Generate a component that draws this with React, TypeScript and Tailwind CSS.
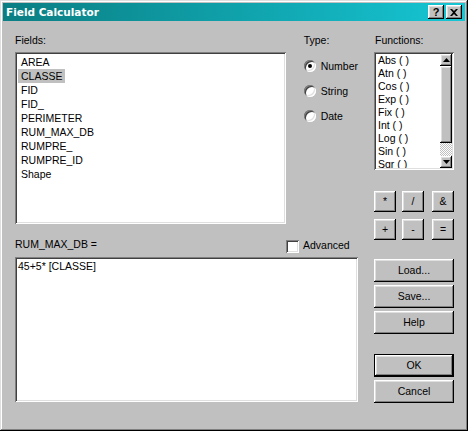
import React from "react";

const raised =
  "shadow-[inset_-1px_-1px_#000,inset_1px_1px_#fff,inset_-2px_-2px_#808080,inset_2px_2px_#dfdfdf]";
const sunken =
  "shadow-[inset_1px_1px_#808080,inset_-1px_-1px_#fff,inset_2px_2px_#404040,inset_-2px_-2px_#dfdfdf]";

function Btn({ children, className = "" }: { children: React.ReactNode; className?: string }) {
  return (
    <div className={`bg-[#c0c0c0] ${raised} flex items-center justify-center ${className}`}>
      {children}
    </div>
  );
}

function Radio({ label, checked }: { label: string; checked?: boolean }) {
  return (
    <div className="flex items-start h-[13px]">
      <div className={`w-[12px] h-[12px] rounded-full bg-white ${sunken} flex items-center justify-center`}>
        {checked && <div className="w-[4px] h-[4px] rounded-full bg-black" />}
      </div>
      <span className="ml-[5px]">{label}</span>
    </div>
  );
}

const fields = ["AREA", "CLASSE", "FID", "FID_", "PERIMETER", "RUM_MAX_DB", "RUMPRE_", "RUMPRE_ID", "Shape"];
const funcs = ["Abs ( )", "Atn ( )", "Cos ( )", "Exp ( )", "Fix ( )", "Int ( )", "Log ( )", "Sin ( )", "Sqr ( )"];

function Arrow({ up }: { up?: boolean }) {
  return (
    <svg width="7" height="4" viewBox="0 0 7 4">
      {up ? <polygon points="0,4 7,4 3.5,0" fill="#000" /> : <polygon points="0,0 7,0 3.5,4" fill="#000" />}
    </svg>
  );
}

export default function App() {
  return (
    <div className="w-[468px] h-[431px] bg-[#c0c0c0] p-[3px] flex flex-col shadow-[inset_-1px_-1px_#000,inset_1px_1px_#dfdfdf,inset_-2px_-2px_#808080,inset_2px_2px_#fff] text-black text-[10.5px] leading-[13px] font-['Liberation_Sans',Arial,sans-serif]">
      {/* Title bar */}
      <div className="h-[18px] shrink-0 flex items-center pl-[3px] pr-[3px] bg-linear-to-r from-[#0a7e83] to-[#16c6d4]">
        <span className="text-white font-bold text-[10.5px] leading-[12px] font-['DejaVu_Sans',sans-serif]">
          Field Calculator
        </span>
        <div className="ml-auto flex gap-[2px]">
          <Btn className="w-[16px] h-[14px]">
            <span className="font-bold text-[11px] leading-[11px] font-['Liberation_Sans',Arial,sans-serif]">?</span>
          </Btn>
          <Btn className="w-[16px] h-[14px]">
            <svg width="8" height="7" viewBox="0 0 8 7">
              <path d="M0 0h2l2 2 2-2h2L5 3.5 8 7H6L4 5 2 7H0l3-3.5z" fill="#000" />
            </svg>
          </Btn>
        </div>
      </div>

      {/* Content */}
      <div className="flex pl-[12px] pt-[13px]">
        {/* Left area */}
        <div className="w-[343px] flex flex-col">
          <div className="flex">
            <div className="w-[273px] flex flex-col">
              <div className="h-[13px]">Fields:</div>
              <div className={`mt-[5px] h-[172px] bg-white ${sunken} pl-[3px] pt-[3px]`}>
                {fields.map((f, i) => (
                  <div key={f} className="h-[14px] leading-[14px]">
                    <span className={`inline-block px-[3px] ${i === 1 ? "bg-[#c0c0c0]" : ""}`}>{f}</span>
                  </div>
                ))}
              </div>
            </div>
            <div className="ml-[18px] flex flex-col">
              <div className="h-[13px]">Type:</div>
              <div className="mt-[13px] flex flex-col gap-[12px]">
                <Radio label="Number" checked />
                <Radio label="String" />
                <Radio label="Date" />
              </div>
            </div>
          </div>

          <div className="mt-[14px] flex h-[13px] items-start">
            <div className="w-[271px]">RUM_MAX_DB =</div>
            <div className={`mt-[2px] w-[13px] h-[13px] shrink-0 bg-white ${sunken}`} />
            <span className="ml-[4px] mt-[1px]">Advanced</span>
          </div>

          <div className={`mt-[6px] h-[145px] bg-white ${sunken} pl-[3px] pt-[3px]`}>45+5* [CLASSE]</div>
        </div>

        {/* Right column */}
        <div className="ml-[16px] w-[80px] flex flex-col">
          <div className="h-[13px] pl-[1px]">Functions:</div>
          <div className={`mt-[5px] h-[118px] bg-white ${sunken} flex p-[2px]`}>
            <div className="flex-1 overflow-hidden pl-[2px]">
              {funcs.map((f) => (
                <div key={f} className="h-[13px] whitespace-nowrap">
                  {f}
                </div>
              ))}
            </div>
            <div className="w-[12px] flex flex-col">
              <Btn className="h-[12px] shrink-0">
                <Arrow up />
              </Btn>
              <Btn className="h-[77px] shrink-0">{null}</Btn>
              <div className="flex-1 bg-[repeating-conic-gradient(#c0c0c0_0_25%,#ffffff_0_50%)] bg-[length:2px_2px]" />
              <Btn className="h-[12px] shrink-0">
                <Arrow />
              </Btn>
            </div>
          </div>

          <div className="mt-[21px] flex">
            <Btn className="w-[22px] h-[21px]">*</Btn>
            <Btn className="w-[22px] h-[21px] ml-[6px]">/</Btn>
            <Btn className="w-[22px] h-[21px] ml-[8px]">&amp;</Btn>
          </div>
          <div className="mt-[7px] flex">
            <Btn className="w-[22px] h-[21px]">+</Btn>
            <Btn className="w-[22px] h-[21px] ml-[6px]">-</Btn>
            <Btn className="w-[22px] h-[21px] ml-[8px]">=</Btn>
          </div>

          <Btn className="mt-[19px] h-[23px]">Load...</Btn>
          <Btn className="mt-[3px] h-[23px]">Save...</Btn>
          <Btn className="mt-[3px] h-[23px]">Help</Btn>
          <div className="mt-[20px] h-[23px] border border-black flex">
            <Btn className="flex-1">OK</Btn>
          </div>
          <Btn className="mt-[3px] h-[23px]">Cancel</Btn>
        </div>
      </div>
    </div>
  );
}
